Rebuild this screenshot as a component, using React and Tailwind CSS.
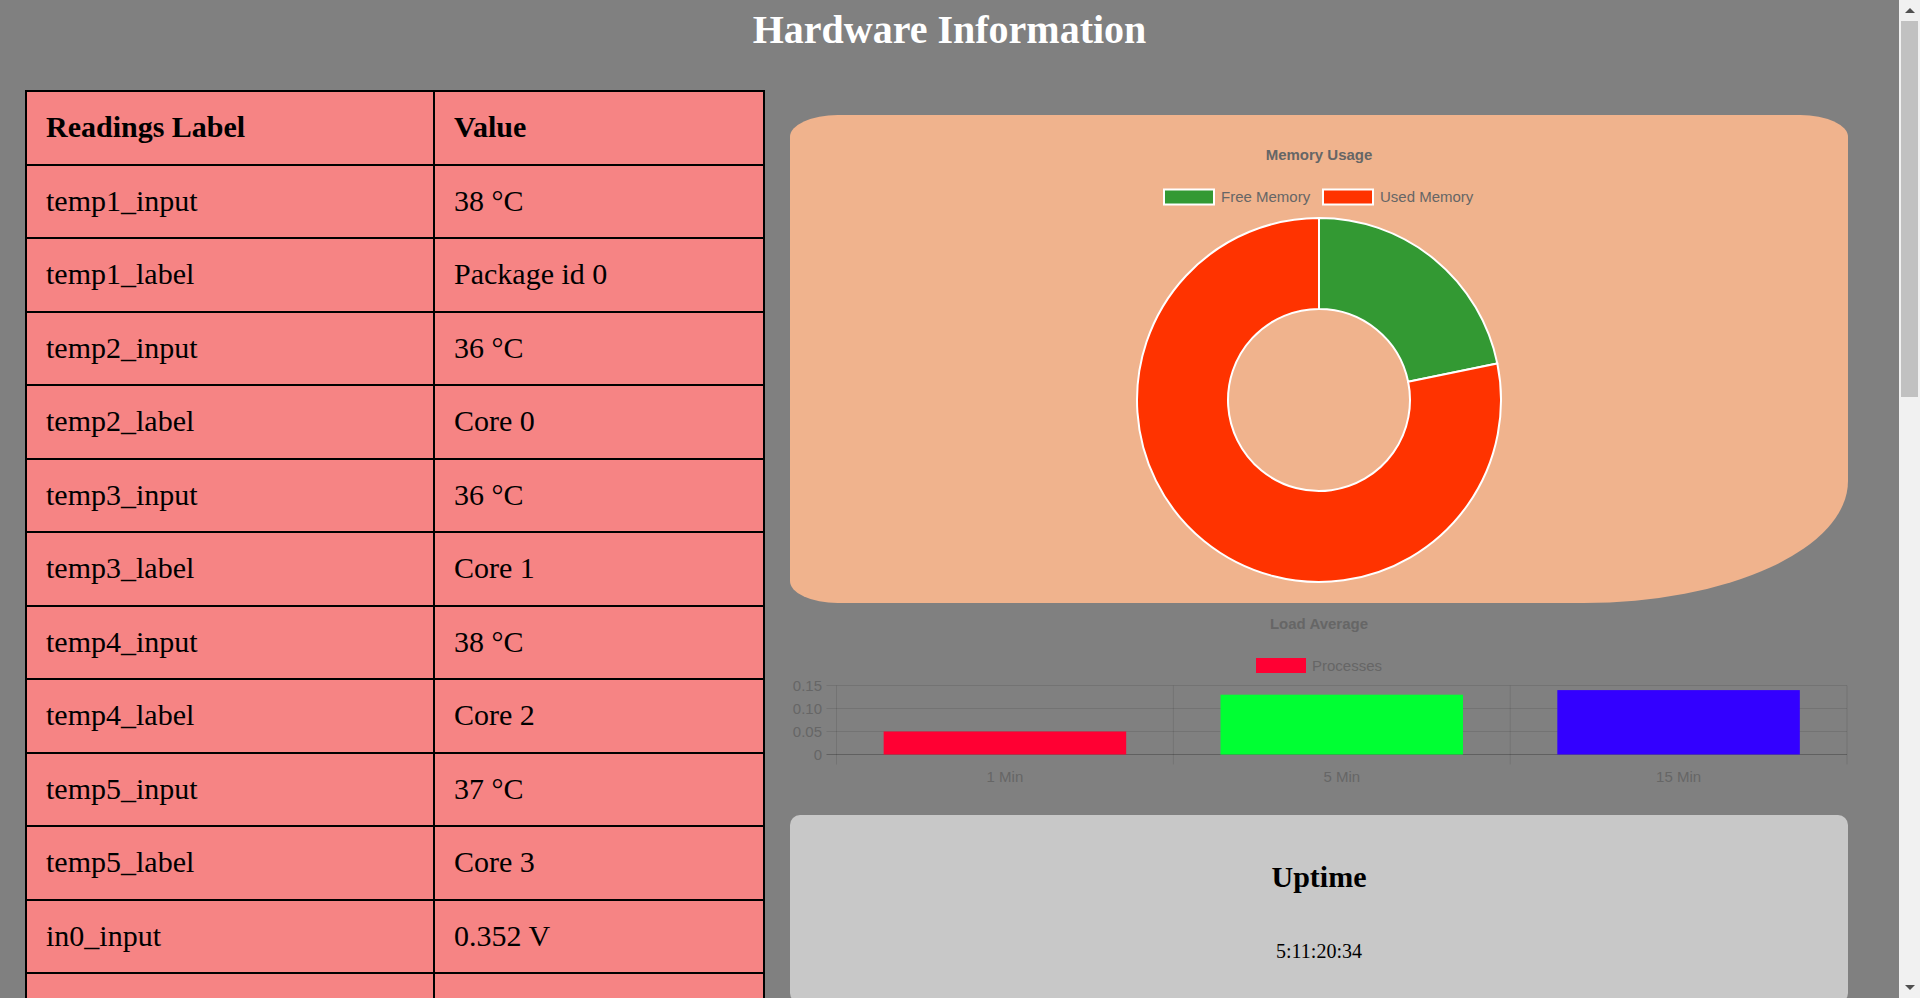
const readings = [
  ['temp1_input', '38 °C'],
  ['temp1_label', 'Package id 0'],
  ['temp2_input', '36 °C'],
  ['temp2_label', 'Core 0'],
  ['temp3_input', '36 °C'],
  ['temp3_label', 'Core 1'],
  ['temp4_input', '38 °C'],
  ['temp4_label', 'Core 2'],
  ['temp5_input', '37 °C'],
  ['temp5_label', 'Core 3'],
  ['in0_input', '0.352 V'],
  ['in1_input', '1.032 V'],
  ['in2_input', '3.344 V'],
  ['in3_input', '3.344 V'],
  ['in4_input', '1.016 V'],
  ['in5_input', '2.040 V'],
  ['in6_input', '0.144 V'],
  ['in7_input', '3.440 V'],
  ['in8_input', '3.296 V'],
  ['fan1_input', '0 RPM'],
  ['fan2_input', '1054 RPM'],
  ['fan3_input', '0 RPM'],
  ['fan4_input', '0 RPM'],
  ['fan5_input', '0 RPM'],
  ['temp6_input', '34 °C'],
  ['temp7_input', '35 °C'],
  ['temp8_input', '33 °C'],
  ['intrusion0_alarm', '0'],
  ['intrusion1_alarm', '0'],
  ['cpu0_vid', '0.000 V'],
  ['power1_input', '12.40 W'],
  ['power1_cap', '65.00 W'],
];

const loads = [
  { label: '1 Min', value: 0.05, color: '#ff0033' },
  { label: '5 Min', value: 0.13, color: '#00ff33' },
  { label: '15 Min', value: 0.14, color: '#3300ff' },
];

function MemoryChart() {
  // donut centre (529, 285), outer r 182, inner r 91, free ≈ 21.8%
  return (
    <svg width="1058" height="488" className="block font-['Liberation_Sans',Arial,sans-serif]">
      <text x="529" y="45" textAnchor="middle" fontSize="15" fontWeight="bold" fill="#666">
        Memory Usage
      </text>
      <rect x="374" y="74.5" width="50" height="15" fill="#339933" stroke="#fff" strokeWidth="2" />
      <text x="431" y="87" fontSize="15" fill="#666">Free Memory</text>
      <rect x="533" y="74.5" width="50" height="15" fill="#ff3300" stroke="#fff" strokeWidth="2" />
      <text x="590" y="87" fontSize="15" fill="#666">Used Memory</text>
      <path
        d="M 529 103 A 182 182 0 0 1 707.29 248.4 L 618.14 266.7 A 91 91 0 0 0 529 194 Z"
        fill="#339933"
        stroke="#fff"
        strokeWidth="2"
      />
      <path
        d="M 707.29 248.4 A 182 182 0 1 1 529 103 L 529 194 A 91 91 0 1 0 618.14 266.7 Z"
        fill="#ff3300"
        stroke="#fff"
        strokeWidth="2"
      />
    </svg>
  );
}

function LoadChart() {
  const left = 46.5;
  const right = 1057;
  const top = 82.5;
  const zero = 151.5;
  const catW = (right - left) / 3;
  const barW = catW * 0.72;
  const yFor = (v) => zero - (v / 0.15) * (zero - top);
  const ticks = [
    ['0.15', 0.15],
    ['0.10', 0.1],
    ['0.05', 0.05],
    ['0', 0],
  ];

  return (
    <svg width="1058" height="190" className="block font-['Liberation_Sans',Arial,sans-serif]">
      <text x="529" y="26" textAnchor="middle" fontSize="15" fontWeight="bold" fill="#666">
        Load Average
      </text>
      <rect x="466" y="55" width="50" height="15" fill="#ff0033" />
      <text x="522" y="68" fontSize="15" fill="#666">Processes</text>

      {ticks.map(([label, v]) => (
        <g key={label}>
          <line
            x1="36.5"
            x2={right}
            y1={yFor(v)}
            y2={yFor(v)}
            stroke={v === 0 ? 'rgba(0,0,0,0.25)' : 'rgba(0,0,0,0.1)'}
            strokeWidth="1"
          />
          <text x="32" y={yFor(v) + 5} textAnchor="end" fontSize="15" fill="#666">
            {label}
          </text>
        </g>
      ))}

      {[0, 1, 2, 3].map((i) => (
        <line
          key={i}
          x1={left + catW * i}
          x2={left + catW * i}
          y1={top}
          y2="161.5"
          stroke="rgba(0,0,0,0.1)"
          strokeWidth="1"
        />
      ))}

      {loads.map((l, i) => {
        const cx = left + catW * i + catW / 2;
        return (
          <g key={l.label}>
            <rect x={cx - barW / 2} y={yFor(l.value)} width={barW} height={zero - yFor(l.value)} fill={l.color} />
            <text x={cx} y="179" textAnchor="middle" fontSize="15" fill="#666">
              {l.label}
            </text>
          </g>
        );
      })}
    </svg>
  );
}

// the window's scrollbar, drawn over the right edge
function Scrollbar() {
  return (
    <div className="fixed right-0 top-0 flex h-screen w-[21px] flex-col items-center bg-[#f1f1f1]">
      <div className="mt-[8px] h-0 w-0 border-x-[5px] border-b-[5px] border-x-transparent border-b-[#505050]" />
      <div className="mt-[8px] h-[376px] w-[17px] bg-[#c1c1c1]" />
      <div className="mt-auto mb-[8px] h-0 w-0 border-x-[5px] border-t-[5px] border-x-transparent border-t-[#505050]" />
    </div>
  );
}

export default function App() {
  return (
    <div className="min-h-screen w-[1899px] bg-[#808080] pb-[18px] font-['Liberation_Serif','Times_New_Roman',serif] text-[20px] text-black">
      <h1 className="pt-[7px] text-center text-[40px] font-bold leading-[46px] text-white">Hardware Information</h1>

      <div className="mt-[37px] flex items-start gap-[25px] pl-[25px]">
        <table className="w-[738px] table-fixed border-collapse bg-[#f68484] text-[30px] leading-[34.5px]">
          <thead>
            <tr>
              <th className="w-[408px] border-2 border-black px-[19px] pb-[19px] pt-[18px] text-left font-bold">Readings Label</th>
              <th className="w-[330px] border-2 border-black px-[19px] pb-[19px] pt-[18px] text-left font-bold">Value</th>
            </tr>
          </thead>
          <tbody>
            {readings.map(([label, value]) => (
              <tr key={label}>
                <td className="border-2 border-black px-[19px] pb-[19px] pt-[18px]">{label}</td>
                <td className="border-2 border-black px-[19px] pb-[19px] pt-[18px]">{value}</td>
              </tr>
            ))}
          </tbody>
        </table>

        <div className="mt-[25px] flex w-[1058px] flex-col">
          <div className="h-[488px] overflow-hidden rounded-[4.5%_4.5%_25%_4.5%] bg-[#f0b38d]">
            <MemoryChart />
          </div>

          <LoadChart />

          <div className="mt-[22px] flex flex-col items-center rounded-[10px] bg-[#c8c8c8] px-5 py-5">
            <h2 className="mt-[25px] text-[30px] font-bold leading-[34.5px]">Uptime</h2>
            <p className="mb-[20px] mt-[45px] leading-[23px]">5:11:20:34</p>
          </div>
        </div>
      </div>

      <Scrollbar />
    </div>
  );
}
